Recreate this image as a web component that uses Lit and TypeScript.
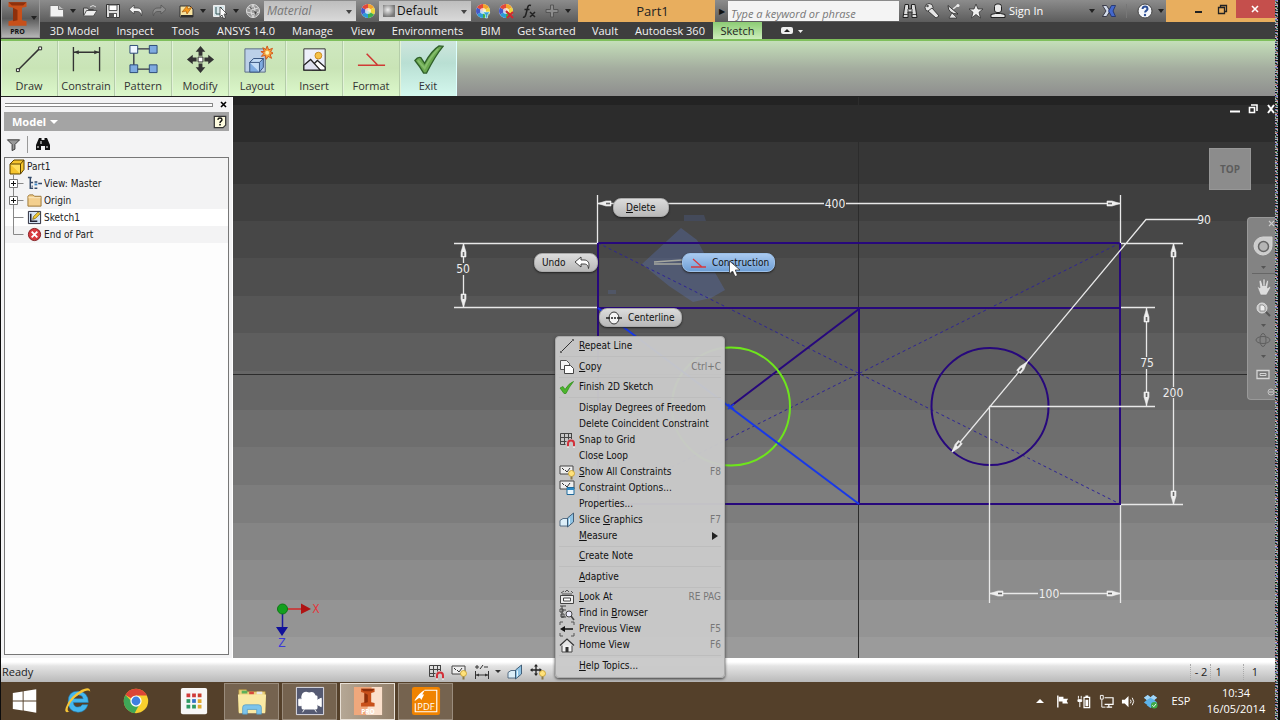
import { LitElement, html, svg, css, nothing } from "lit";
import { customElement } from "lit/decorators.js";
import { classMap } from "lit/directives/class-map.js";

const wheel = svg`
  <circle cx="8" cy="8" r="7" fill="#e8eef8"/>
  <path d="M8 8V1A7 7 0 0 1 14 4.500z" fill="#f3a32c"/><path d="M8 8L14 4.500A7 7 0 0 1 14 11.500z" fill="#f0d53a"/>
  <path d="M8 8L14 11.500A7 7 0 0 1 8 15z" fill="#3fae49"/><path d="M8 8V15A7 7 0 0 1 2 11.500z" fill="#2c9bd8"/>
  <path d="M8 8L2 11.500A7 7 0 0 1 2 4.500z" fill="#4458c8"/><path d="M8 8L2 4.500A7 7 0 0 1 8 1z" fill="#e0483a"/>
  <circle cx="8" cy="8" r="3" fill="#fff" opacity=".7"/>`;
const bulb = svg`<circle cx="12.500" cy="9.500" r="3" fill="#ffe27a" stroke="#c49a2c" stroke-width=".8"/><rect x="11.500" y="12.500" width="2" height="3" fill="#8a7a4a"/>`;
const magnet = svg`<path d="M9 14.500v-3a3 3 0 0 1 6 0v3" fill="none" stroke="#d2303a" stroke-width="2"/><path d="M8 15h2M14 15h2" stroke="#fff"/>`;
const grid = svg`<path d="M1.500 1.500h11M1.500 5.500h11M1.500 9.500h6M1.500 12.500h5M1.500 1.500v11M5.500 1.500v11M9.500 1.500v6M12.500 1v6" stroke="#444" fill="none"/>`;
const slice = svg`<path d="M1 8.500l3-2h4.500v7.500H1z" fill="#dceef8" stroke="#37536e" stroke-width=".8"/><path d="M8.500 6l6-5v9l-6 5z" fill="#8fc3e4" stroke="#37536e" stroke-width=".9"/><path d="M10.500 6.500v6" stroke="#e5f4fc"/>`;
const invI = svg`<path d="M4 1h16v4l-4 1v11l4 1v4H4v-4l4-1V6L4 5z" fill="#c8501a"/><path d="M8 6l4 2v9l-4 1zM4 1h16l-3 3H7z" fill="#8e300c"/>`;

const ICONS: Record<string, unknown> = {
  page: svg`<path d="M1 2.500h8.500l5 3.500v8H1z" fill="#f2f2f2" stroke="#777"/><path d="M9.500 2.500v4h5" fill="#bbb" stroke="#777"/>`,
  open: svg`<path d="M1.500 13V5h4l1 1.500h5V8" fill="#d6d6d6" stroke="#444"/><path d="M1.500 13l3-5.500H15L11.500 13z" fill="#eee" stroke="#555"/><path d="M8 4q3-3 6 0" stroke="#ddd" fill="none"/>`,
  save: svg`<path d="M1.500 1.500h13v13h-13z" fill="#ddd" stroke="#333"/><path d="M4 2h8v5.500H4z" fill="#fff" stroke="#555"/><path d="M4 10h8v4.500H4z" fill="#555"/><path d="M9 11h2v3H9z" fill="#fff"/>`,
  undo: svg`<path d="M1 6.500L6 2v3h3c4 0 6 3 4.500 8C13 10 12 8.500 9 8.500H6V11z" fill="#f2f2f2" stroke="#444" stroke-width=".8"/>`,
  redo: svg`<path d="M15 6.500L10 2v3H7C3 5 1 8 2.500 13 3 10 4 8.500 7 8.500h3V11z" fill="#8c8c8c" stroke="#555" stroke-width=".8"/>`,
  update: svg`<path d="M1 3h10l3 3v8H1z" fill="#f7e3a0" stroke="#333"/><path d="M3 9l5-6 1 3 4-2-5 7-1-3z" fill="#f59a1c" stroke="#9a4c06" stroke-width=".6"/><path d="M2 12h12v2H2z" fill="#2d2d2d"/>`,
  pick: svg`<path d="M1.500 2.500h11v11h-11z" fill="#d8e6ea" stroke="#eee"/><path d="M4 4v7h4M9 4v5" stroke="#355" fill="none"/><path d="M8 4l7 7h-3l1.500 4-2 .6L10 12l-2 2z" fill="#fff" stroke="#222" stroke-width=".7"/>`,
  globe: svg`<circle cx="8" cy="8" r="6.500" fill="#999" stroke="#ddd"/><path d="M3 5q5 3 10 0M2 9q6 3 12 0M8 2q-4 6 0 12M8 2q4 6 0 12" stroke="#ddd" fill="none"/><path d="M5 4l2 1-1 2zM9 8l3 1-2 3z" fill="#444"/>`,
  wheel,
  wheelDown: svg`${wheel}<path d="M8 9h7l-2.500 3v3h-2v-3z" fill="#37a0dc" stroke="#dff" stroke-width=".6"/>`,
  wheelX: svg`${wheel}<path d="M8 8l7 7M15 9l-6 6" stroke="#cf2630" stroke-width="2"/>`,
  fx: svg`<path d="M2 14q2 1 3-3l1.800-7Q7.500 1.500 10 2.500M3.500 6.500h5M9 9l5 5M14 9l-5 5" stroke="#222" stroke-width="1.500" fill="none"/>`,
  plus: svg`<path d="M6.500 2h3v4.500H14v3H9.500V14h-3V9.500H2v-3h4.500z" fill="#8d8d8d" stroke="#555"/>`,
  binoc: svg`<path d="M3 1.500h3.500V6h3V1.500H13l2 13h-5V9H6v5.500H1z" fill="#ddd" stroke="#222"/><path d="M6 6v4M10 6v4M2 11.500h4M10 11.500h4" stroke="#444"/>`,
  key: svg`<circle cx="5" cy="4.500" r="4" fill="#e6e6e6" stroke="#222" stroke-width=".8"/><path d="M4 8l8 7 3-2-7-8z" fill="#e6e6e6" stroke="#222" stroke-width=".8"/><circle cx="3.500" cy="3" r="1.300" fill="#555"/>`,
  dish: svg`<path d="M7 6l5-4" stroke="#e6e6e6" stroke-width="1.600"/><circle cx="12" cy="2.500" r="1.500" fill="#eee"/><path d="M2 2.500q0 8.500 10 8.500z" fill="#e6e6e6" stroke="#222" stroke-width=".8"/><path d="M6 10l5 5H3z" fill="#e6e6e6" stroke="#222" stroke-width=".6"/>`,
  star: svg`<path d="M8 1l2 5h5l-4 3.300L12.500 15 8 11.500 3.500 15 5 9.300 1 6h5z" fill="#f0f0f0" stroke="#333" stroke-width=".8"/>`,
  user: svg`<rect x="4.500" y="1" width="7" height="8.500" rx="2.500" fill="#e8e8e8" stroke="#222"/><path d="M1 14.500v-3l4.500-1h5l4.500 1v3z" fill="#e8e8e8" stroke="#222"/>`,
  exchange: svg`<path d="M1.500 2.500h4L9 8l-3.500 5.500h-4L5 8z" fill="#d5ddea" stroke="#223" stroke-width=".8"/><path d="M14.500 2.500h-4L7.500 8l3 5.500h4L12 8z" fill="#4468cc" stroke="#1c2c66" stroke-width=".8"/>`,
  help: svg`<circle cx="8" cy="8" r="7" fill="#f4f6fa" stroke="#444"/><path d="M5.500 6q.3-2.500 2.600-2.500T10.500 6c0 1.500-2.400 1.800-2.400 3.500" stroke="#2d4f96" stroke-width="2" fill="none"/><circle cx="8" cy="12" r="1.200" fill="#2d4f96"/>`,
  draw: svg`<path d="M4 27L27 4" stroke="#333" stroke-width="1.500"/><path d="M2.500 25.500h3v3h-3zM25.500 3h3v3h-3z" fill="#fff" stroke="#222"/>`,
  constrain: svg`<path d="M2.500 3v25M29.500 3v25M3 8.500h26" stroke="#333" stroke-width="1.400"/><path d="M3 8.500l5-2v4zM29 8.500l-5-2v4z" fill="#333"/>`,
  pattern: svg`<path d="M6 5h20M6 5v21h20" stroke="#334" stroke-width="1.400" fill="none"/><path d="M2 1.500h8v8H2z" fill="#eef5ff" stroke="#2b4a77"/><path d="M22 1.500h8v8h-8zM2 21.500h8v8H2zM22 21.500h8v8h-8z" fill="#7fabe0" stroke="#2b4a77"/>`,
  modify: svg`<path d="M16 2l5 6h-3v4h-4V8h-3zM16 30l5-6h-3v-4h-4v4h-3zM2 16l6-5v3h4v4H8v3zM30 16l-6-5v3h-4v4h4v3z" fill="#333"/><path d="M13.500 13.500h5v5h-5z" fill="#fff" stroke="#333"/>`,
  layout: svg`<path d="M3 5h21v24H3z" fill="#bcd0e8" stroke="#5b6c85"/><path d="M8 19l4-4h10v9l-4 5H8z" fill="#7fabe0" stroke="#37537e"/><path d="M8 19h10v10M18 19l4-4H12l-4 4" fill="#c4dcf6" stroke="#37537e"/><path d="M26 2l1.500 4 4-1.500-2 3.500 3 1.500-3.500 1.300 1.500 4-3.500-2-2 3-1-4-4 1 2.500-3-3-2h3.500l-1.500-4 3 2z" fill="#f6a53c" stroke="#d4571c"/><circle cx="26" cy="9" r="2" fill="#fff3b0"/>`,
  insert: svg`<path d="M5 5h22v22H5z" fill="#eef0fb" stroke="#333"/><circle cx="20" cy="12" r="3.500" fill="#f6c34a" stroke="#c88a20"/><path d="M14 22l5-5 8 7v3H14z" fill="#fff" stroke="#222" stroke-width="1.300"/><path d="M5 22l7-6 10 11H5z" fill="#dfe1f0" stroke="#222" stroke-width="1.300"/>`,
  format: svg`<path d="M2 22h28M11 10l11 11.500" stroke="#cf3a34" stroke-width="1.600"/>`,
  check: svg`<path d="M2 17q3-4 6-3l4 6Q19 7 27 2l4 .5Q23 12 14 30h-3Q7 23 2 17z" fill="#6aa84f" stroke="#2f5f2a" stroke-width="1.400"/><path d="M5 17l7 8Q18 13 26 5" stroke="#84bc6c" stroke-width="2" fill="none"/>`,
  filter: svg`<path d="M1.500 3h13L9.500 8v5l-3 1.500V8z" fill="#999" stroke="#333"/>`,
  binocDark: svg`<path d="M4 2h2.500v2h3V2H12l3 7v5h-5v-4H6v4H1V9z" fill="#111"/><path d="M3 10v2M12 10v2M6 5v3" stroke="#fff"/>`,
  noteHelp: svg`<path d="M1.500 1.500h13v10l-3 3h-10z" fill="#fffde0" stroke="#333" stroke-width="1.400"/><path d="M5.500 5.500q.3-2 2.500-2t2.300 2C10.300 7 8 7 8 9" stroke="#111" stroke-width="1.600" fill="none"/><circle cx="8" cy="11" r="1" fill="#111"/>`,
  part: svg`<path d="M1 5l4-4h10v9.500L11.500 15H1z" fill="#f6c52e" stroke="#5c4300"/><path d="M1 5h10.500v10M11.500 5L15 1" fill="#ffdf5e" stroke="#5c4300"/>`,
  views: svg`<path d="M1 1.500h4M3.500 2v11h3M3.500 7h3M8 6.500h3M8 13h3M12 8h4M5 11h1" stroke="#334a6a" stroke-width="1.600" fill="none"/><path d="M8 9h3" stroke="#3a86c8" stroke-width="2"/>`,
  folder: svg`<path d="M1 3.500L2.500 2h4L8 3.500h7V14H1z" fill="#f3cf8e" stroke="#9a7433"/><path d="M1.500 5h13" stroke="#fbe8c0"/>`,
  sketch: svg`<path d="M1.500 1.500h13v13h-13z" fill="#d4e3f5" stroke="#223"/><path d="M4 4v8h7" stroke="#223" stroke-width="1.600" fill="none"/><path d="M6 10l1-3 5-5 2 2-5 5z" fill="#f1c834" stroke="#6b5400" stroke-width=".7"/>`,
  stop: svg`<circle cx="8" cy="8" r="6.500" fill="#d93a3f" stroke="#7f1a1e"/><path d="M5 5l6 6M11 5l-6 6" stroke="#fff" stroke-width="2"/>`,
  line: svg`<path d="M2 14L14 2" stroke="#333"/><path d="M1 13h2v2H1zM13 1h2v2h-2z" fill="#666"/>`,
  copy: svg`<path d="M1.500 1.500h6l3 3v6h-9z" fill="#f4f4f4" stroke="#555"/><path d="M5.500 6.500h6l3 3v5h-9z" fill="#fff" stroke="#444"/>`,
  tick: svg`<path d="M1 9l3-1.500 2 3Q10 4 14.500 2.500 10 8 7 14.500H5z" fill="#4cb52c" stroke="#2c8a18" stroke-width=".7"/>`,
  snap: svg`${grid}${magnet}`,
  showCon: svg`<path d="M1 2h13v8H1z" fill="#eee" stroke="#444"/><path d="M3 4l2 2M6 6l2 2 3-4" stroke="#333" fill="none"/>${bulb}`,
  conOpt: svg`<path d="M1 1h14v8H1z" fill="#eee" stroke="#444"/><path d="M3 3l2 2M6 5l2 2 3-4" stroke="#333" fill="none"/><path d="M8 7.500h7v7H8z" fill="#e9f4fb" stroke="#1f6a9c"/><path d="M8 9h7" stroke="#2a88c4" stroke-width="2"/>`,
  slice,
  look: svg`<path d="M1.500 6.500h13v8h-13z" fill="#eee" stroke="#444"/><path d="M4.500 9h7v3h-7z" fill="#fff" stroke="#444"/><path d="M2 4l3-2M6 3l2-2 2 2M12 2l2 2M3 5h10" stroke="#555" fill="none"/>`,
  find: svg`<path d="M1 1h6M3 1v12M3 5h4M3 12h4M1 4h3v3H1zM2 9h3v3H2z" stroke="#444" fill="#ddd"/><circle cx="10" cy="9" r="3" fill="#eef" stroke="#444"/><path d="M12 11l3 4" stroke="#444" stroke-width="1.500"/>`,
  prev: svg`<path d="M1 8l5-3v2.300h8v1.500H6V11z" fill="#111"/><path d="M1 4V1h3M12 1h3v3M1 12v3h3M12 15h3v-3" stroke="#555" fill="none"/>`,
  home: svg`<path d="M3 8v7h10V8" fill="#f2f2f2" stroke="#444"/><path d="M1 8.500L8 2l7 6.500" fill="#e5e5e5" stroke="#333" stroke-width="1.200"/><path d="M6.500 10h3v5h-3z" fill="#333"/>`,
  undoLt: svg`<path d="M1 7L7 2v3h3c4 0 6 3 4.500 8.500C14 10 12.500 9 10 9H7v3z" fill="#fff" stroke="#333" stroke-width=".9"/>`,
  angle: svg`<path d="M1 12h15M3 4l9 8" stroke="#d83a40" stroke-width="1.300"/>`,
  center: svg`<ellipse cx="8" cy="8" rx="5" ry="6" fill="#f4f4f4" stroke="#333"/><path d="M0 8h4M5 8h2M8 8h2M11 8h5" stroke="#222" stroke-width="1.400"/>`,
  dims: svg`<path d="M1 3h4M3 1v4M10 3h4M6 5l3-4M1.500 7v8M14.500 7v8M2 11h12" stroke="#333"/><path d="M2 11l3-1.500v3zM14 11l-3-1.500v3z" fill="#333"/>`,
  dof: svg`<path d="M6 2v8M2 6h8" stroke="#222" stroke-width="1.300"/><path d="M6 0l2 2.500H4zM6 12l2-2.500H4zM0 6l2.500-2v4zM12 6L9.500 4v4z" fill="#222"/>${bulb}`,
  flag: svg`<path d="M3 1.500v13" stroke="#fff" stroke-width="1.500"/><path d="M4 3h5v2h5l-1.500 2.500L14 10H8V8H4z" fill="#fff"/>`,
  power: svg`<path d="M7.500 3.500h6v11h-6z" stroke="#fff" stroke-width="1.300" fill="none"/><path d="M9 1.500h3v2H9zM9 6h3v7H9z" fill="#fff"/><path d="M1.500 2v3M4.500 2v3M1 6h4v2H1zM3 8v6" stroke="#fff" fill="#fff"/>`,
  net: svg`<path d="M6 4h9v7H6M8 14h6M10.500 11v3" stroke="#fff" stroke-width="1.300" fill="none"/><path d="M1.500 1.500h3v4h-3zM3 6v8h4" stroke="#fff" fill="none"/>`,
  volume: svg`<path d="M1 6h3l4-4v12L4 10H1z" fill="#fff"/><path d="M10 6q1.500 2 0 4M12 4q3 4 0 8" stroke="#fff" fill="none"/>`,
  dropbox: svg`<path d="M5 1L1 4l3 2.500L1 9l4 3 3-2.500 3 2.500 4-3-3-2.500L15 4l-4-3-3 2.500zM4 12l4 3 4-3-4-2.500z" fill="#5cb3ea"/><path d="M5 1l3 2.500L11 1l4 3-3 2.500L8 4 4 6.500 1 4z" fill="#a4d6f6"/><circle cx="12" cy="12" r="3.500" fill="#3faa48"/><path d="M10 12l1.500 1.500L14 10.500" stroke="#fff" fill="none"/>`,
  start: svg`<path d="M3 7.500l10.500-1.600V15.500H3zM14.500 5.700L28 3.500v12H14.500zM3 16.500h10.500v9.600L3 24.500zM14.500 16.500H28v12l-13.500-2.300z" fill="#fff"/>`,
  ie: svg`<path d="M27 17.500H11q.5 5 5 5 3.200 0 4.500-2.500h6Q24 28 16 28 5.500 27.500 5.500 16.500T16 5.500q11 .5 11 12zM11 13.500h10.500Q21 9.500 16.300 9.500T11 13.500z" fill="#45b7ee" stroke="#1c86c4" stroke-width=".6"/><path d="M7 27Q1 30 3 23 7 11 20 4q9-4 9 2-1-2-6-.5Q11 11 5.500 22 4 27 7 27z" fill="#f7c637"/>`,
  chrome: svg`<circle cx="16" cy="16" r="13" fill="#f7cf2e"/><path d="M16 16L4.700 9.500A13 13 0 0 1 27.500 10H16z" fill="#dc4437"/><path d="M16 16l-5 0L4.700 9.500A13 13 0 0 0 14.500 29L20 19z" fill="#3fa757"/><circle cx="16" cy="16" r="6" fill="#fff"/><circle cx="16" cy="16" r="4.700" fill="#3f7fe0"/>`,
  apps: svg`<rect x="2" y="2" width="28" height="28" rx="2" fill="#f7f7f7"/><path d="M8 8h4v4H8zM14 8h4v4h-4z" fill="#d03a3a"/><path d="M20 8h4v4h-4z" fill="#c9402e"/><path d="M8 14h4v4H8z" fill="#2f9a62"/><path d="M14 14h4v4h-4z" fill="#3572c8"/><path d="M20 14h4v4h-4zM20 20h4v4h-4z" fill="#e0a92e"/><path d="M8 20h4v4H8zM14 20h4v4h-4z" fill="#2f9a62"/>`,
  explorer: svg`<path d="M2 6V4h8l1 2h19v22H2z" fill="#ecd27c" stroke="#b9973e" stroke-width=".7"/><path d="M5 5h6v3H5z" fill="#5cb15a"/><path d="M13 6h5v3h-5z" fill="#d8483c"/><path d="M21 6h6v3h-6z" fill="#e9e9e9"/><path d="M1 9h30l-1 20H2z" fill="#f9e9a4"/><path d="M6 30v-7q0-3 3-3h14q3 0 3 3v7h-5v-5H11v5z" fill="#7cc4ec" stroke="#4a94c0" stroke-width=".7"/>`,
  camera: svg`<path d="M1.500 1.500h29v29h-29z" fill="#555a72" stroke="#e4e4ee"/><path d="M7 10q1-4 5-4l3 1q5-2 7 3v3H7z" fill="#fff"/><rect x="7" y="10" width="17" height="15" rx="1.500" fill="#fff"/><path d="M24 15l4-2v9l-4-2zM4 14h3v7H4zM10 25l-2 3M21 25l2 3" fill="#fff" stroke="#fff"/>`,
  inventor: svg`<path d="M1 1h30v30H1z" fill="#f0a87c"/><path d="M20 1h11v30H14z" fill="#fbe0cc"/><g transform="translate(5 2) scale(.9)">${invI}</g><text x="16" y="30" text-anchor="middle" font-size="7" font-weight="700" fill="#fff">PRO</text>`,
  pdf: svg`<rect x="1" y="1" width="30" height="30" rx="2.500" fill="#f08300"/><path d="M14.500 4.500h13v23h-23v-9" stroke="#fff" stroke-width="1.200" fill="none"/><path d="M4 15q5-8 11-11l-3 5h2l-3 6q-1-3-3-2l-4 3z" fill="#fff"/><text x="16" y="26" text-anchor="middle" font-size="10" fill="#fff">PDF</text>`,
  appI: invI,
};

function icon(name: string, size: number, box = 16) {
  return html`<svg class="ic" width=${size} height=${size} viewBox="0 0 ${box} ${box}" aria-hidden="true">${ICONS[name]}</svg>`;
}

const shared = css`
  * { box-sizing: border-box; }
  button { font: inherit; color: inherit; background: none; border: 0; padding: 0; margin: 0; display: flex; align-items: center; justify-content: center; white-space: nowrap; }
  .ic { display: block; flex: none; }
`;

/* ------------------------------------------------ title bar, tabs, ribbon */

@customElement("inv-header")
class InvHeader extends LitElement {
  static styles = [shared, css`
    :host { display: block; font: 11px/16px "Open Sans", "Noto Sans", sans-serif; }
    .top { display: grid; grid-template-columns: 39px 1fr; background: #3e3e3e; }
    .app { grid-row: 1 / 3; flex-direction: column; position: relative; background: linear-gradient(#8b8b8b, #5a5a5a 50%, #b4b4b4); border: 1px solid #999; border-top: 0; height: 38px; font: bold 7px/8px "Open Sans", sans-serif; color: #111; padding-right: 6px; }
    .app::after { content: ""; position: absolute; right: 2px; top: 16px; }
    .app::after, .caret::after { border: 3px solid transparent; border-top: 4px solid #222; border-bottom: 0; }
    .quick { display: flex; align-items: center; height: 22px; background: linear-gradient(#8c8c8c, #5c5c5c); padding-left: 5px; }
    .q { width: 23px; height: 20px; flex: none; }
    .q.slim { width: 22px; }
    .caret { width: 10px; height: 20px; flex: none; }
    .caret::after { content: ""; }
    .gap { width: 5px; flex: none; }
    .pick { position: relative; height: 20px; flex: none; display: flex; align-items: center; background: linear-gradient(#bdbdbd, #d9d9d9); }
    .pick select { appearance: none; border: 0; background: none; width: 92px; height: 20px; padding: 0 12px 0 3px; font: 12px/16px "Open Sans", "Noto Sans", sans-serif; color: #111; }
    .pick .muted { font-style: italic; color: #777; }
    .pick.swatch select { padding-left: 18px; }
    .pick::after { content: ""; position: absolute; right: 4px; top: 9px; border: 3px solid transparent; border-top: 4px solid #444; border-bottom: 0; pointer-events: none; }
    .ball { position: absolute; left: 4px; top: 4px; width: 12px; height: 12px; background: radial-gradient(circle at 40% 40%, #eee, #777 70%); }
    .doc { flex: 0 0 137px; height: 22px; background: #e8ae5e; display: grid; place-items: center; padding-left: 12px; font-size: 13px; color: #222; }
    .more { width: 13px; height: 20px; flex: none; font-size: 8px; color: #111; }
    .search { flex: 1 1 168px; min-width: 80px; height: 20px; border: 0; padding: 4px 3px 0; background: #f4f4f4; font: italic 11px/16px "Open Sans", "Noto Sans", sans-serif; }
    .search::placeholder { color: #777; opacity: 1; }
    .sign { width: 78px; justify-content: flex-start; color: #fff; flex: none; }
    .bar { width: 1px; height: 14px; background: #777; margin: 0 6px; flex: none; }
    .win { display: flex; height: 22px; background: #e8ae5e; flex: none; width: 109px; padding-left: 20px; }
    .win button { width: 24px; height: 18px; }
    .win .close { width: 39px; margin-left: 2px; background: #c54f4c; }
    .tabs { display: grid; height: 17px; padding-left: 1px; justify-content: start; grid-template-columns: 67px 54px 47px 74px 59px 42px 87px 39px 73px 44px 86px 49px 60px; color: #f2f2f2; }
    .tabs button { height: 17px; }
    .tabs .on { background: linear-gradient(#8ccc74, #cdeebb); color: #222; }
    .ribbon { display: flex; height: 58px; border-top: 2px solid #7fbf5c; border-bottom: 1px solid #222; background: linear-gradient(#c4dfb9, #a4ad9f 50%, #8e8e8e); }
    .ribbon button { width: 57px; height: 55px; flex-direction: column; justify-content: space-between; padding: 3px 0 2px; background: linear-gradient(#cfe8c0, #c9e4b6 50%, #dcf8cb); border-right: 1px solid #b4cda9; box-shadow: inset 1px 0 #e2f3d8; color: #333; }
    .ribbon .exit { background: linear-gradient(#cfe6dd, #b9dfd3 40%, #d4f8ee); border-right-color: #dff; }
  `];
  render() {
    const q = (n: string, label: string, slim = false) => html`<button class=${classMap({ q: true, slim })} aria-label=${label}>${icon(n, 16)}</button>`;
    const caret = html`<button class="caret" aria-label="More"></button>`;
    const tabs = ["3D Model", "Inspect", "Tools", "ANSYS 14.0", "Manage", "View", "Environments", "BIM", "Get Started", "Vault", "Autodesk 360", "Sketch"];
    const panels = [["draw", "Draw"], ["constrain", "Constrain"], ["pattern", "Pattern"], ["modify", "Modify"], ["layout", "Layout"], ["insert", "Insert"], ["format", "Format"], ["check", "Exit"]];
    return html`
      <div class="top">
        <button class="app">${icon("appI", 27, 24)}PRO</button>
        <div class="quick">
          ${q("page", "New")}${caret}${q("open", "Open")}${q("save", "Save")}${q("undo", "Undo")}${q("redo", "Redo")}
          <span class="gap"></span>${q("update", "Update")}${caret}${q("pick", "Select")}${caret}${q("globe", "Material browser")}
          <span class="pick"><select class="muted" aria-label="Material"><option>Material</option></select></span>
          ${q("wheel", "Appearance browser")}
          <span class="pick swatch"><i class="ball"></i><select aria-label="Appearance"><option>Default</option></select></span>
          ${q("wheelDown", "Adjust")}${q("wheelX", "Clear")}${q("fx", "Parameters")}${q("plus", "Measure")}${caret}<span class="gap"></span>
          <span class="doc">Part1</span>
          <button class="more" aria-label="Expand search">▶</button>
          <input class="search" aria-label="Search" placeholder="Type a keyword or phrase">
          ${q("binoc", "Search", true)}${q("key", "Subscription", true)}${q("dish", "Communication", true)}${q("star", "Favorites", true)}${q("user", "Account", true)}
          <button class="sign">Sign In</button>${caret}${q("exchange", "Exchange Apps")}<i class="bar"></i>${q("help", "Help")}${caret}
          <div class="win">
            <button aria-label="Minimize"><svg width="9" height="9"><path d="M1 7h7" stroke="#222" stroke-width="2"/></svg></button>
            <button aria-label="Restore"><svg width="11" height="11"><path d="M1.500 3.500h6v6h-6zM3.500 3V1.500h6v6H8" fill="none" stroke="#222" stroke-width="1.300"/></svg></button>
            <button class="close" aria-label="Close"><svg width="9" height="9"><path d="M1 1l6 6M7 1L1 7" stroke="#fff" stroke-width="1.600"/></svg></button>
          </div>
        </div>
        <nav class="tabs">
          ${tabs.map((t) => html`<button class=${classMap({ on: t === "Sketch" })}>${t}</button>`)}
          <button aria-label="Ribbon state"><svg width="24" height="9"><rect x="1" y="1" width="12" height="7" rx="2" fill="#eee"/><path d="M4 6l3-3 3 3z" fill="#222"/><path d="M18 4h5l-2.500 3z" fill="#eee"/></svg></button>
        </nav>
      </div>
      <div class="ribbon">
        ${panels.map(([i, l]) => html`<button class=${classMap({ exit: l === "Exit" })}>${icon(i, 31, 32)}<span>${l}</span></button>`)}
      </div>`;
  }
}

/* ------------------------------------------------------------ browser pane */

@customElement("model-browser")
class ModelBrowser extends LitElement {
  static styles = [shared, css`
    :host { display: flex; flex-direction: column; width: 232px; flex: none; background: #f3f3f4; padding: 0 3px 3px; font: 10px/17px "DejaVu Sans Condensed", "Noto Sans", sans-serif; color: #222; border-right: 1px solid #fff; }
    .grip { display: flex; align-items: center; gap: 5px; height: 15px; }
    .grip i { flex: 1; height: 4px; margin-left: 1px; border: 1px solid #888; border-left: 0; background: #fff; }
    .grip button { width: 11px; }
    .head { display: flex; align-items: center; justify-content: space-between; height: 19px; padding: 0 2px 0 8px; background: #a4a4a4; color: #fff; }
    .title { font: bold 11px/16px "Noto Sans", sans-serif; gap: 4px; }
    .title::after { content: ""; border: 4px solid transparent; border-top-color: #fff; border-bottom: 0; }
    .tools { display: flex; align-items: center; height: 26px; padding: 0 2px; gap: 6px; }
    .tools i { width: 1px; height: 17px; background: #999; }
    .tools button:last-child { margin-left: 1px; }
    ul { list-style: none; margin: 0; padding: 0; }
    .tree { flex: 1; border: 1px solid #777; background: #fdfdfd; }
    li { display: flex; align-items: center; height: 17px; background: #f3f3f4; gap: 2px; padding-left: 4px; }
    li.sel { background: #fff; }
    li button { gap: 2px; }
    .branch { flex: none; }
  `];
  render() {
    const rows: [string, string, boolean][] = [["views", "View: Master", true], ["folder", "Origin", true], ["sketch", "Sketch1", false], ["stop", "End of Part", false]];
    return html`
      <div class="grip"><i></i><button aria-label="Close panel"><svg width="7" height="7"><path d="M1 1l5 5M6 1L1 6" stroke="#000" stroke-width="1.600"/></svg></button></div>
      <div class="head"><button class="title">Model</button><button aria-label="Help">${icon("noteHelp", 14)}</button></div>
      <div class="tools"><button aria-label="Filter">${icon("filter", 15)}</button><i></i><button aria-label="Find">${icon("binocDark", 16)}</button></div>
      <ul class="tree">
        <li><button>${icon("part", 16)}Part1</button></li>
        ${rows.map(([i, l, plus], n) => html`<li class=${classMap({ sel: l === "Sketch1" })}>
          <svg class="branch" width="16" height="17"><path d=${n === 3 ? "M4.500 0v8.500h10" : "M4.500 0v17M4.500 8.500h10"} stroke="#888" fill="none"/>
          ${plus ? svg`<path d="M.5 4.500h8v8h-8z" fill="#fff" stroke="#777"/><path d="M2 8.500h5M4.500 6v5" stroke="#111"/>` : nothing}</svg>
          <button>${icon(i, 15)}${l}</button></li>`)}
      </ul>`;
  }
}

/* ---------------------------------------------------------- sketch drawing */

function arrow(x: number, y: number, deg: number) {
  return svg`<g transform="translate(${x} ${y}) rotate(${deg})"><path class="arrow" d="M0 0L-8 -2.500H-13V2.500H-8Z"/><path class="hollow" d="M-8 -.8H-12V.8H-8Z"/></g>`;
}

@customElement("sketch-view")
class SketchView extends LitElement {
  static styles = [shared, css`
    :host { display: block; position: relative; z-index: 1; flex: 1; min-width: 0; font: 10px/16px "DejaVu Sans Condensed", "Noto Sans", sans-serif; color: #111;
      background: linear-gradient(#232323 8px, #2c2c2c 8px 45px, #363636 45px 87px, #3f3f3f 87px 124px, #474747 124px 161px, #4e4e4e 161px 199px, #565656 199px 236px, #5e5e5e 236px 274px, #666 274px 313px, #6e6e6e 313px 350px, #757575 350px 388px, #7d7d7d 388px 426px, #858585 426px 463px, #8c8c8c 463px 503px, #949494 503px 540px, #9b9b9b 540px); }
    .scene { position: absolute; left: 0; top: 0; width: 100%; height: 100%; }
    .axis { stroke: #2c2c2c; fill: none; }
    .geo { stroke: #27087c; stroke-width: 2; fill: none; }
    .cons { stroke: #2d2396; stroke-dasharray: 3 3; fill: none; }
    .picked { stroke: #1838e8; stroke-width: 2; fill: none; }
    .hot { stroke: #6ee51c; stroke-width: 2; fill: none; }
    .dim { stroke: #e8e8e8; stroke-width: 1.300; fill: none; }
    .arrow { fill: #eee; stroke: #eee; stroke-width: .6; }
    .hollow { fill: #666; }
    text { font: 12px "DejaVu Sans Condensed", sans-serif; fill: #eee; text-anchor: middle; }
    .x { fill: #e2383c; } .z { fill: #3a3ad8; }
    .mdi { position: absolute; right: -3px; top: 5px; display: flex; gap: 4px; }
    .mdi button { width: 14px; height: 13px; }
    .cube { position: absolute; right: 24px; top: 51px; width: 42px; height: 42px; background: #8c8c8c; border: 1px solid #979797; color: #5c5c5c; font: bold 10px "Open Sans", sans-serif; }
    .nav { position: absolute; right: 0; top: 120px; width: 28px; border: 1px solid #999; border-right: 0; border-radius: 4px 0 0 4px; background: #838383; display: flex; flex-direction: column; align-items: center; padding: 2px 0; }
    .nav svg { display: block; }
    .pill { position: absolute; height: 19px; padding: 0 12px; gap: 6px; border-radius: 8px; border: 1px solid #aaa; background: linear-gradient(#dcdcdc, #b9b9b9); box-shadow: 0 1px 2px #222; }
    .delete { left: 380px; top: 101px; }
    .undo { left: 301px; top: 156px; padding: 0 7px; gap: 8px; }
    .construction { left: 449px; top: 156px; padding: 0 5px 0 7px; background: linear-gradient(#a9caf0, #6f9fd6); border-color: #9cc0e8; }
    .centerline { left: 366px; top: 211px; padding: 0 6px; }
    .pointer { position: absolute; left: 495px; top: 163px; }
  `];
  render() {
    return html`
      <svg class="scene" aria-label="Sketch1"><g transform="translate(-233 -97)">
        <path class="axis" d="M858.500 97V2000M233 374.500H4000"/>
        <path d="M642 264L681 228l16 12 12 22 16 28-14 8-18 4-24-16z" fill="#5a78c8" opacity=".3"/>
        <path d="M684 215h20l2 6h-22zM608 290h8v4h-8z" fill="#5a78c8" opacity=".2"/>
        <path d="M654 262l28-2M654 264h28" stroke="#a5a8a0" stroke-width="1.500"/>
        <path class="cons" d="M598 243L1120 504M1120 243L598 504"/>
        <path class="geo" d="M598 243H1120V504H598zM598 308H1120M859 308V504M731 406L859 309"/>
        <circle class="geo" cx="990" cy="406.500" r="58.500"/>
        <circle class="hot" cx="731" cy="406.500" r="59"/>
        <path class="picked" d="M598 308L859 504"/>
        <path d="M728 404l6 5M734 404l-6 5" stroke="#1838e8" stroke-width="1.500"/>
        <path class="dim" d="M597.500 195V243M1120.500 195V243M598 203.500H824M846 203.500H1120M454 243.500H597M454 307.500H597M463.500 244V263M463.500 275V307M1121 307.500H1155M989 406.500H1155M1146.500 308V357M1146.500 369V406M1121 243.500H1183M1121 504.500H1183M1173.500 244V387M1173.500 398V504M989.500 406V603M1120.500 505V603M990 593.500H1038M1060 593.500H1120M952 452L1146 219.500H1198"/>
        ${arrow(598, 203.5, 180)}${arrow(1120, 203.5, 0)}${arrow(463.5, 244, -90)}${arrow(463.5, 307, 90)}
        ${arrow(1146.5, 309, -90)}${arrow(1146.5, 405, 90)}${arrow(1173.5, 244, -90)}${arrow(1173.5, 504, 90)}
        ${arrow(990, 593.5, 180)}${arrow(1120, 593.5, 0)}${arrow(1027, 362, -50)}${arrow(952, 452, 130)}
        <text x="835" y="208">400</text><text x="463" y="273">50</text><text x="1204" y="224">90</text>
        <text x="1147" y="367">75</text><text x="1173" y="397">200</text><text x="1049" y="598">100</text>
        <path d="M283 609h20" stroke="#d02a2a" stroke-width="1.500"/><path d="M301 603.500l10 5.500-10 5z" fill="#b01414"/>
        <path d="M282.500 612v18" stroke="#1a1a9c" stroke-width="1.500"/><path d="M276 627h12l-6 9z" fill="#10109a"/>
        <circle cx="282.500" cy="609" r="5" fill="#14a01e" stroke="#0c7a14"/>
        <text class="x" x="316" y="613">X</text><text class="z" x="282" y="647">Z</text>
      </g></svg>
      <div class="mdi">
        <button aria-label="Minimize document"><svg width="11" height="9"><path d="M0 7.500h10" stroke="#fff" stroke-width="2"/></svg></button>
        <button aria-label="Restore document"><svg width="10" height="10"><path d="M1.500 3.500h5v5h-5zM3 1h6v6" fill="none" stroke="#fff" stroke-width="1.600"/></svg></button>
        <button aria-label="Close document"><svg width="10" height="10"><path d="M2 1l6 8M8 1L2 9" stroke="#fff" stroke-width="2"/></svg></button>
      </div>
      <button class="cube">TOP</button>
      <div class="nav"><svg width="26" height="177" viewBox="0 0 26 177" fill="none" stroke="#d4d4d4">
        <path d="M20 1l5 5M25 1l-5 5" stroke="#ccc" stroke-width="1.200"/>
        <path d="M14 17h9v9a9 9 0 1 1-9-9z" fill="#cdcdcd"/><circle cx="14.500" cy="26.500" r="5" fill="#b5b5b5" stroke="#666" stroke-width="1.500"/>
        <path d="M12 46h5l-2.500 3z" fill="#555" stroke="none"/><path d="M3 53.500h23" stroke="#666"/>
        <path d="M8 66l3 2-1-7 2-1 2 6V59h2v7l2-6 1.500 1-1 7 3-2v2l-4 7h-6z" fill="#ddd" stroke="#777" stroke-width=".6"/>
        <circle cx="13" cy="88" r="5" fill="#c5c5c5" stroke="#ddd"/><path d="M11 85h3l2 2v4h-5z" fill="#eee" stroke="#777" stroke-width=".7"/><path d="M17 92l4 4" stroke="#555" stroke-width="2"/>
        <path d="M12 104h5l-2.500 3z" fill="#555" stroke="none"/>
        <ellipse cx="14" cy="120" rx="7" ry="3.500" stroke="#5f5f5f"/><ellipse cx="14" cy="120" rx="3" ry="6.500" stroke="#5f5f5f"/>
        <path d="M12 135h5l-2.500 3z" fill="#555" stroke="none"/>
        <path d="M8 150.500h12v8H8z" fill="#777" stroke-width="1.300"/><path d="M11 153.500h6v2h-6z"/>
        <circle cx="22" cy="172" r="3" stroke="#c4c4c4"/><path d="M20 172h4"/>
      </svg></div>
      <button class="pill delete"><span><u>D</u>elete</span></button>
      <button class="pill undo">Undo ${icon("undoLt", 16)}</button>
      <button class="pill construction">${icon("angle", 16)}Construction</button>
      <button class="pill centerline">${icon("center", 16)}Centerline</button>
      <svg class="pointer" width="14" height="18"><path d="M1.500 1v13l3-3 2.500 5.500 2.500-1L7.300 10H12z" fill="#fff" stroke="#333" stroke-width=".8"/></svg>
      <slot></slot>`;
  }
}

/* ------------------------------------------------------------ context menu */

type Item = { label: string; key?: number; icon?: string; hint?: string; sub?: boolean };
const MENU: Item[][] = [
  [{ label: "Repeat Line", key: 0, icon: "line" }],
  [{ label: "Copy", key: 0, icon: "copy", hint: "Ctrl+C" }],
  [{ label: "Finish 2D Sketch", icon: "tick" }],
  [{ label: "Display Degrees of Freedom" }, { label: "Delete Coincident Constraint" }, { label: "Snap to Grid", icon: "snap" }, { label: "Close Loop" },
   { label: "Show All Constraints", key: 0, icon: "showCon", hint: "F8" }, { label: "Constraint Options...", icon: "conOpt" }, { label: "Properties..." },
   { label: "Slice Graphics", key: 6, icon: "slice", hint: "F7" }, { label: "Measure", key: 0, sub: true }],
  [{ label: "Create Note", key: 0 }],
  [{ label: "Adaptive", key: 0 }],
  [{ label: "Look At", key: 0, icon: "look", hint: "RE PAG" }, { label: "Find in Browser", key: 8, icon: "find" }, { label: "Previous View", icon: "prev", hint: "F5" }, { label: "Home View", icon: "home", hint: "F6" }],
  [{ label: "Help Topics...", key: 0 }],
];

@customElement("context-menu")
class ContextMenu extends LitElement {
  static styles = [shared, css`
    :host { display: block; width: 170px; padding: 1px 3px 3px; border: 1px solid #aaa; border-radius: 4px; background: #c9c9c9f6; box-shadow: 0 1px 3px #333; font: 10px/16px "DejaVu Sans Condensed", "Noto Sans", sans-serif; color: #111; }
    .group + .group { border-top: 1px solid #bdbdbd; margin-top: 2px; padding-top: 2px; }
    .group + .group.tight { padding-top: 1px; }
    button { width: 100%; height: 16px; display: grid; grid-template-columns: 16px minmax(0, 1fr) auto; column-gap: 4px; justify-items: start; text-align: left; }
    .hint { color: #777; }
    .sub { border: 4px solid transparent; border-left: 6px solid #222; border-right: 0; margin-right: 3px; }
  `];
  label(i: Item) {
    if (i.key === undefined) return i.label;
    return html`${i.label.slice(0, i.key)}<u>${i.label[i.key]}</u>${i.label.slice(i.key + 1)}`;
  }
  render() {
    return html`${MENU.map((g, n) => html`<div class=${classMap({ group: true, tight: n === 2 || n === 4 || n === 6 })}>
      ${g.map((i) => html`<button>${i.icon ? icon(i.icon, 16) : html`<span></span>`}<span>${this.label(i)}</span>
        ${i.sub ? html`<span class="sub"></span>` : i.hint ? html`<span class="hint">${i.hint}</span>` : nothing}</button>`)}
    </div>`)}`;
  }
}

/* ---------------------------------------------------- status bar + taskbar */

@customElement("status-bar")
class StatusBar extends LitElement {
  static styles = [shared, css`
    :host { display: flex; align-items: center; height: 24px; padding: 3px 17px 0 1px; background: linear-gradient(#fff 4px, #e4e4e4 8px, #b9b9b9); font: 11px/16px "Open Sans", "Noto Sans", sans-serif; color: #222; }
    .msg { width: 422px; }
    button { width: 23px; }
    .caret { width: 10px; }
    .caret::after { content: ""; border: 3px solid transparent; border-top-color: #333; border-bottom: 0; }
    .nums { margin-left: auto; display: flex; gap: 3px; }
    .nums span { border-left: 1px dotted #aaa; padding-left: 4px; }
    .nums .last { padding-left: 8px; margin-left: 18px; }
  `];
  render() {
    const b = (n: string, l: string) => html`<button aria-label=${l}>${icon(n, 16)}</button>`;
    return html`<span class="msg">Ready</span>
      ${b("snap", "Snap to grid")}${b("showCon", "Show constraints")}${b("dims", "Dimension display")}<button class="caret" aria-label="More"></button>${b("slice", "Slice graphics")}${b("dof", "Degrees of freedom")}
      <div class="nums"><span>- 2</span><span>1</span><span class="last">1</span></div>`;
  }
}

@customElement("task-bar")
class TaskBar extends LitElement {
  static styles = [shared, css`
    :host { display: flex; align-items: center; height: 38px; background: #54402a; color: #fff; font: 11px/16px "Open Sans", "Noto Sans", sans-serif; }
    .app { width: 58px; height: 38px; flex: none; }
    .app:first-child { width: 48px; }
    .tile { width: 55px; height: 37px; margin-right: 3px; border: 1px solid #9a8c7c; background: #75634f; }
    .first { margin-left: 1px; }
    .active { background: linear-gradient(90deg, #b5a795, #93806b); border-color: #e8e0d6; }
    .tray { margin-left: auto; display: flex; align-items: center; padding-right: 4px; }
    .tray button { width: 22px; height: 30px; }
    .up::after { content: ""; border: 4px solid transparent; border-bottom-color: #fff; border-top: 0; }
    .tray .lang { width: 40px; }
    .tray .clock { width: 70px; flex-direction: column; }
  `];
  render() {
    const apps: [string, string, string][] = [["start", "Start", ""], ["ie", "Internet Explorer", ""], ["chrome", "Chrome", ""], ["apps", "Apps", ""], ["explorer", "File Explorer", "tile first"], ["camera", "Recorder", "tile"], ["inventor", "Inventor", "tile active"], ["pdf", "PDF", "tile"]];
    return html`
      ${apps.map(([i, l, c]) => html`<button class="app ${c}" aria-label=${l}>${icon(i, 30, 32)}</button>`)}
      <div class="tray">
        <button class="up" aria-label="Hidden icons"></button>
        ${["flag", "power", "net", "volume", "dropbox"].map((n) => html`<button aria-label=${n}>${icon(n, 15)}</button>`)}
        <button class="lang">ESP</button>
        <button class="clock"><span>10:34</span><span>16/05/2014</span></button>
      </div>`;
  }
}

/* ------------------------------------------------------------------- shell */

@customElement("app-root")
class AppRoot extends LitElement {
  static styles = [shared, css`
    :host { display: grid; grid-template-columns: 1px 1fr 5px; height: 100vh; background: #0c0c0c; overflow: hidden; }
    .shell { grid-column: 2; display: flex; flex-direction: column; min-width: 0; min-height: 0; }
    .work { flex: 1; display: flex; min-height: 0; }
    .menu { position: absolute; left: 322px; top: 239px; }
    .edge { width: 4px; height: 100%; }
  `];
  render() {
    const tones = ["#8aa", "#222", "#c9a", "#585", "#77c", "#111", "#bbb", "#a66", "#356"];
    const cells = Array.from({ length: 192 }, (_, i) => svg`<rect x=${i % 4} y=${Math.floor(i / 4)} width="1" height="1" fill=${tones[((i * 7919 + 13) % 127) % 9]}/>`);
    return html`
      <div class="shell">
        <inv-header></inv-header>
        <div class="work">
          <model-browser></model-browser>
          <sketch-view><context-menu class="menu"></context-menu></sketch-view>
        </div>
        <status-bar></status-bar>
        <task-bar></task-bar>
      </div>
      <svg class="edge"><defs><pattern id="n" width="4" height="48" patternUnits="userSpaceOnUse">${cells}</pattern></defs><rect width="3" height="100%" fill="url(#n)"/></svg>`;
  }
}
